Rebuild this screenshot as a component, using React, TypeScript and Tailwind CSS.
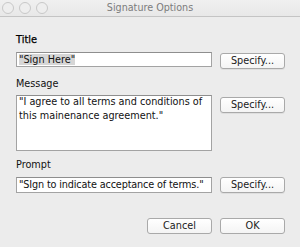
import React from 'react'

const font = "font-['DejaVu_Sans','Liberation_Sans',sans-serif]"

const Specify = ({ className = '' }: { className?: string }) => (
  <button
    className={`w-[65px] h-[16px] rounded-[3px] border border-[#a9a9a9] bg-gradient-to-b from-white to-[#f4f4f4] text-[9.7px] leading-none text-[#1a1a1a] shadow-[0_1px_0_rgba(0,0,0,0.06)] ${className}`}
  >
    Specify...
  </button>
)

const Field = ({ children, h = 'h-[15px]' }: { children: React.ReactNode; h?: string }) => (
  <div className={`w-[196px] ${h} border border-[#a3a3a3] border-t-[#8e8e8e] bg-white px-[2px] text-[9.7px] leading-[13px] text-[#111] overflow-hidden`}>
    {children}
  </div>
)

export default function App() {
  return (
    <div className={`w-[300px] h-[247px] bg-[#ececec] ${font} overflow-hidden`}>
      {/* barra de título (ventana inactiva) */}
      <div className="relative h-[17px] border-b border-[#c4c4c4] bg-gradient-to-b from-[#f0f0f0] to-[#e8e8e8] flex items-center justify-center">
        <div className="absolute left-[2px] top-[2px] flex gap-[5px]">
          {[0, 1, 2].map((i) => (
            <span key={i} className="w-[12px] h-[12px] rounded-full border border-[#c8c8c8] bg-[#eeeeee]" />
          ))}
        </div>
        <span className="text-[9.6px] text-[#7c7c7c]">Signature Options</span>
      </div>

      <div className="pl-[16px]">
        <div className="mt-[17px] h-[12px] text-[9.8px] leading-[12px] text-black [-webkit-text-stroke:0.25px_black]">Title</div>
        <div className="mt-[6px] flex gap-[8px] items-start">
          <Field>
            <span className="bg-[#d6d6d6] leading-[13px]">"Sign Here"</span>
          </Field>
          <Specify className="mt-[1px]" />
        </div>

        <div className="mt-[9px] h-[12px] text-[9.7px] leading-[12px] text-[#111]">Message</div>
        <div className="mt-[5px] flex gap-[8px] items-start">
          <Field h="h-[56px]">
            <p className="leading-[14px] -mt-[1px]">"I agree to all terms and conditions of this mainenance agreement."</p>
          </Field>
          <Specify className="mt-[2px]" />
        </div>

        <div className="mt-[8px] h-[12px] text-[9.7px] leading-[12px] text-[#111]">Prompt</div>
        <div className="mt-[6px] flex gap-[8px] items-start">
          <Field h="h-[16px]">
            <span className="whitespace-nowrap tracking-[-0.15px]">"SIgn to indicate acceptance of terms."</span>
          </Field>
          <Specify />
        </div>

        <div className="mt-[25px] flex gap-[8px] pl-[131px]">
          <button className="w-[65px] h-[16px] rounded-[3px] border border-[#a9a9a9] bg-gradient-to-b from-white to-[#f4f4f4] text-[9.7px] leading-none text-[#1a1a1a]">
            Cancel
          </button>
          <button className="w-[65px] h-[16px] rounded-[3px] border border-[#a9a9a9] bg-gradient-to-b from-white to-[#f4f4f4] text-[9.7px] leading-none text-[#1a1a1a]">
            OK
          </button>
        </div>
      </div>
    </div>
  )
}
